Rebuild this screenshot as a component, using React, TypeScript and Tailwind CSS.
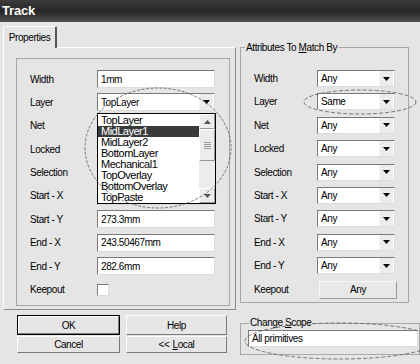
import React from "react";

const font = { fontFamily: '"Liberation Sans", Arial, sans-serif' };

function Arrow() {
    return (
        <svg width="7" height="4" viewBox="0 0 7 4"><polygon points="0,0 7,0 3.5,4" fill="#000" /></svg>
    );
}

function Field({ value, w = "w-[118px]", h = "h-[18px]" }: { value: string; w?: string; h?: string }) {
    return (
        <div className={`${w} ${h} bg-white border border-[#7a7a7a] border-r-[#dcdcdc] border-b-[#dcdcdc] flex items-center pl-[3px] text-black`}>
            {value}
        </div>
    );
}

function Combo({ value, w, h = "h-[17px]" }: { value: string; w: string; h?: string }) {
    return (
        <div className={`${w} ${h} bg-white border border-[#7a7a7a] border-r-[#dcdcdc] border-b-[#dcdcdc] flex items-center text-black`}>
            <span className="pl-[3px] flex-1">{value}</span>
            <div className="w-[14px] h-full mr-[1px] bg-[#ececec] border-l border-[#f4f4f4] flex items-center justify-center">
                <Arrow />
            </div>
        </div>
    );
}

function Button({ children, isDefault = false, h }: { children: React.ReactNode; isDefault?: boolean; h: string }) {
    return (
        <div className={`${h} ${isDefault ? "border border-black" : ""} bg-[#e6e6e6]`}>
            <div className="h-full border border-white border-r-[#7a7a7a] border-b-[#7a7a7a] flex items-center justify-center text-black">
                {children}
            </div>
        </div>
    );
}

const layers = ["TopLayer", "MidLayer1", "MidLayer2", "BottomLayer", "Mechanical1", "TopOverlay", "BottomOverlay", "TopPaste"];

const leftRows: [string, string][] = [
    ["Width", "1mm"],
    ["Layer", "TopLayer"],
    ["Net", ""],
    ["Locked", ""],
    ["Selection", ""],
    ["Start - X", ""],
    ["Start - Y", "273.3mm"],
    ["End - X", "243.50467mm"],
    ["End - Y", "282.6mm"],
];

const rightRows = ["Width", "Layer", "Net", "Locked", "Selection", "Start - X", "Start - Y", "End - X", "End - Y"];

export default function App() {
    return (
        <div className="relative w-[420px] h-[364px] overflow-hidden bg-[#e5e5e5] text-black text-[10px] tracking-[-0.4px]" style={font}>
            <div className="h-[22px] bg-gradient-to-b from-[#3c3c3c] via-[#262626] to-[#505050] flex items-center pl-[2px]">
                <span className="text-white font-bold text-[13px] tracking-[-0.2px]">Track</span>
            </div>

            <div className="flex">
                {/* left: tab + buttons */}
                <div className="w-[240px] pl-[3px]">
                    <div className="h-[25px] flex items-end">
                        <div className="h-[22px] w-[54px] bg-[#e5e5e5] border-t border-l border-white border-r-2 border-r-[#555] rounded-t-[2px] flex items-center justify-center relative top-[1px]">
                            Properties
                        </div>
                    </div>
                    <div className="w-[233px] h-[263px] border border-white border-r-[#8a8a8a] border-b-[#8a8a8a] pt-[10px] pl-[12px]">
                        <div className="relative w-[214px] h-[248px] border border-[#a8a8a8] pt-[11px] pl-[13px] flex flex-col gap-[5.4px]">
                            {leftRows.map(([label, value]) => (
                                <div key={label} className="flex items-center h-[18px]">
                                    <span className="w-[67px]">{label}</span>
                                    {label === "Layer" ? (
                                        <Combo value={value} w="w-[118px]" h="h-[18px]" />
                                    ) : (
                                        <Field value={value} />
                                    )}
                                </div>
                            ))}
                            <div className="flex items-center h-[18px]">
                                <span className="w-[67px]">Keepout</span>
                                <div className="w-[12px] h-[12px] bg-white border border-[#7a7a7a] border-r-[#dcdcdc] border-b-[#dcdcdc]" />
                            </div>

                            {/* open layer list */}
                            <div className="absolute left-[80px] top-[54px] w-[119px] h-[91px] bg-white border border-black flex">
                                <div className="flex-1 flex flex-col pt-[1px]">
                                    {layers.map((l) => (
                                        <div
                                            key={l}
                                            className={`h-[11px] leading-[11px] text-[11px] tracking-[-0.5px] pl-[3px] ${l === "MidLayer1" ? "bg-[#3a3a3a] text-white" : ""}`}
                                        >
                                            {l}
                                        </div>
                                    ))}
                                </div>
                                <div className="w-[16px] bg-[#ececec] flex flex-col">
                                    <div className="h-[15px] border border-white border-r-[#9a9a9a] border-b-[#9a9a9a] flex items-center justify-center">
                                        <svg width="7" height="4" viewBox="0 0 7 4"><polygon points="0,4 7,4 3.5,0" fill="#555" /></svg>
                                    </div>
                                    <div className="h-[32px] border border-white border-r-[#9a9a9a] border-b-[#9a9a9a] flex flex-col items-center justify-center gap-[1px]">
                                        <div className="w-[7px] h-[1px] bg-[#999]" />
                                        <div className="w-[7px] h-[1px] bg-[#999]" />
                                        <div className="w-[7px] h-[1px] bg-[#999]" />
                                        <div className="w-[7px] h-[1px] bg-[#999]" />
                                    </div>
                                    <div className="flex-1" />
                                    <div className="h-[15px] border border-white border-r-[#9a9a9a] border-b-[#9a9a9a] flex items-center justify-center">
                                        <svg width="7" height="4" viewBox="0 0 7 4"><polygon points="0,0 7,0 3.5,4" fill="#555" /></svg>
                                    </div>
                                </div>
                            </div>
                        </div>
                    </div>

                    <div className="ml-[14px] mt-[5px] grid grid-cols-[103px_101px] gap-x-[6px] gap-y-[1px]">
                        <Button isDefault h="h-[20px]">OK</Button>
                        <Button h="h-[20px]">Help</Button>
                        <Button h="h-[17px]">Cancel</Button>
                        <Button h="h-[17px]">
                            &lt;&lt; <span className="underline ml-[3px]">L</span>ocal
                        </Button>
                    </div>
                </div>

                {/* right: groups */}
                <div className="pl-[3px] pt-[25px]">
                    <div className="relative w-[169px] h-[256px] border border-[#a8a8a8] pt-[22px] pl-[13px] flex flex-col gap-[6.4px]">
                        <span className="absolute -top-[7px] left-[4px] bg-[#e5e5e5] px-[1px] leading-[13px]">
                            Attributes To <span className="underline">M</span>atch By
                        </span>
                        {rightRows.map((label) => (
                            <div key={label} className="flex items-center h-[17px]">
                                <span className="w-[63px]">{label}</span>
                                <Combo value={label === "Layer" ? "Same" : "Any"} w="w-[78px]" />
                            </div>
                        ))}
                        <div className="flex items-center h-[18px]">
                            <span className="w-[65px]">Keepout</span>
                            <div className="w-[78px] h-[18px] bg-[#e8e8e8] border border-[#f8f8f8] border-r-[#9a9a9a] border-b-[#9a9a9a] flex items-center justify-center">
                                Any
                            </div>
                        </div>
                    </div>

                    <div className="relative mt-[20px] w-[180px] h-[32px] border border-[#a8a8a8] pt-[6px] pl-[7px]">
                        <span className="absolute -top-[8px] left-[8px] bg-[#e5e5e5] px-[1px] leading-[13px]">
                            Change <span className="underline">S</span>cope
                        </span>
                        <Field value="All primitives" w="w-[170px]" h="h-[17px]" />
                    </div>
                </div>
            </div>

            {/* hand-drawn annotation ellipses */}
            <svg className="absolute inset-0 pointer-events-none" width="420" height="364">
                <ellipse cx="158" cy="148" rx="73" ry="60" fill="none" stroke="#5a5a5a" strokeWidth="0.8" strokeDasharray="3 1.5" />
                <ellipse cx="360" cy="102" rx="56" ry="12" fill="none" stroke="#5a5a5a" strokeWidth="0.8" strokeDasharray="4 2" />
                <ellipse cx="340" cy="341" rx="95" ry="18" fill="none" stroke="#5a5a5a" strokeWidth="0.8" strokeDasharray="4 2" />
            </svg>
        </div>
    );
}
